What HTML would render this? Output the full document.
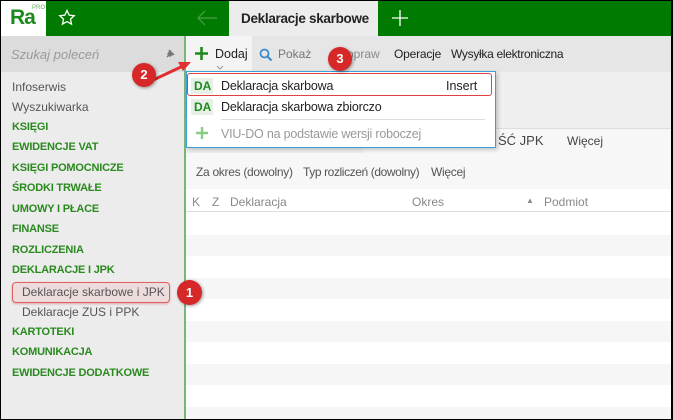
<!DOCTYPE html>
<html><head><meta charset="utf-8"><style>
*{margin:0;padding:0;box-sizing:border-box}
body{width:673px;height:420px;overflow:hidden;font-family:"Liberation Sans",sans-serif;font-size:12px;color:#333;background:#000;position:relative}
#f{position:absolute;left:1px;top:1px;width:670px;height:418px;background:#fff;overflow:hidden}
.a{position:absolute;white-space:nowrap}
.g{color:#2a8a1f;font-weight:bold;font-size:11px;letter-spacing:-.2px}
.s{color:#555;font-size:12px}
</style></head><body><div id="f">
<div class="a" style="left:0;top:0;width:45px;height:35px;background:#fff"></div>
<div class="a" style="left:9px;top:5px;font-size:21px;color:#1e8a1e;font-weight:bold;letter-spacing:-1px">Ra</div>
<div class="a" style="left:31px;top:4px;font-size:6px;color:#6a6">PRO</div>
<div class="a" style="left:45px;top:0;width:183px;height:35px;background:#007a00"></div>
<svg class="a" style="left:57px;top:8px" width="18" height="18" viewBox="0 0 18 18"><path d="M9 1.5l2.2 4.6 5 .6-3.7 3.4 1 5-4.5-2.5-4.5 2.5 1-5L1.8 6.7l5-.6z" fill="none" stroke="#fff" stroke-width="1.3"/></svg>
<svg class="a" style="left:195px;top:8px" width="22" height="18"><path d="M2 9h19M9 2L2 9l7 7" fill="none" stroke="#3a9a3a" stroke-width="1.5"/></svg>
<div class="a" style="left:228px;top:0;width:149px;height:35px;background:#ececec;font-size:13.5px;font-weight:bold;color:#222;padding:10px 0 0 12px;letter-spacing:-.3px">Deklaracje skarbowe</div>
<div class="a" style="left:377px;top:0;width:293px;height:35px;background:#007a00"></div>
<svg class="a" style="left:390px;top:8px" width="18" height="18"><path d="M9 1v16M1 9h16" stroke="#fff" stroke-width="1.3"/></svg>
<!-- sidebar -->
<div class="a" style="left:0;top:35px;width:183px;height:383px;background:#ececec"></div>
<div class="a" style="left:0;top:35px;width:183px;height:36px;background:#dcdcdc"></div>
<div class="a" style="left:10px;top:46px;font-style:italic;color:#999;font-size:13px">Szukaj poleceń</div>
<svg class="a" style="left:163px;top:47px" width="12" height="12"><path d="M3 9l3-3M5 2l5 5M6 3l-2 3 2 2 3-2" stroke="#777" stroke-width="1.5" fill="#777"/></svg>
<div class="a" style="left:183px;top:35px;width:2px;height:383px;background:#7bb47b"></div>
<div class="a s" style="left:11px;top:79px">Infoserwis</div>
<div class="a s" style="left:11px;top:99px">Wyszukiwarka</div>
<div class="a g" style="left:11px;top:120px">KSIĘGI</div>
<div class="a g" style="left:11px;top:140px">EWIDENCJE VAT</div>
<div class="a g" style="left:11px;top:161px">KSIĘGI POMOCNICZE</div>
<div class="a g" style="left:11px;top:181px">ŚRODKI TRWAŁE</div>
<div class="a g" style="left:11px;top:202px">UMOWY I PŁACE</div>
<div class="a g" style="left:11px;top:222px">FINANSE</div>
<div class="a g" style="left:11px;top:243px">ROZLICZENIA</div>
<div class="a g" style="left:11px;top:263px">DEKLARACJE I JPK</div>
<div class="a" style="left:11px;top:281px;width:158px;height:21px;border:1px solid #e06060;border-radius:4px;background:#ecdcdc;box-shadow:0 1px 2px rgba(200,0,0,.3)"></div>
<div class="a s" style="left:21px;top:284px">Deklaracje skarbowe i JPK</div>
<div class="a s" style="left:21px;top:304px">Deklaracje ZUS i PPK</div>
<div class="a g" style="left:11px;top:325px">KARTOTEKI</div>
<div class="a g" style="left:11px;top:345px">KOMUNIKACJA</div>
<div class="a g" style="left:11px;top:366px">EWIDENCJE DODATKOWE</div>
<!-- toolbar -->
<div class="a" style="left:185px;top:35px;width:485px;height:36px;background:#e6e6e6"></div>
<div class="a" style="left:185px;top:35px;width:66px;height:36px;background:#f4f4f4"></div>
<svg class="a" style="left:194px;top:46px" width="13" height="13"><path d="M6.5 0v13M0 6.5h13" stroke="#1e8a1e" stroke-width="2.6"/></svg>
<div class="a" style="left:214px;top:46px;font-size:12.5px;color:#222">Dodaj</div>
<svg class="a" style="left:215px;top:64px" width="8" height="5"><path d="M1 1l3 3 3-3" stroke="#999" fill="none"/></svg>
<svg class="a" style="left:258px;top:47px" width="14" height="14"><circle cx="5.5" cy="5.5" r="4" fill="none" stroke="#3a8acc" stroke-width="1.8"/><path d="M8.5 8.5l4 4" stroke="#3a8acc" stroke-width="2"/></svg>
<div class="a" style="left:277px;top:46px;color:#777;font-size:12px">Pokaż</div>
<div class="a" style="left:346px;top:46px;color:#888;font-size:12px">opraw</div>
<div class="a" style="left:393px;top:46px;color:#222;font-size:12px;letter-spacing:-.2px">Operacje</div>
<div class="a" style="left:450px;top:46px;color:#222;font-size:12px;letter-spacing:-.3px">Wysyłka elektroniczna</div>
<!-- content -->
<div class="a" style="left:185px;top:71px;width:485px;height:56px;background:#efefef"></div>
<div class="a" style="left:362px;top:127px;width:308px;height:25px;background:#f7f7f7;border-top:1px solid #ddd"></div>
<div class="a" style="left:185px;top:127px;width:177px;height:25px;background:#efefef"></div>
<div class="a" style="left:497px;top:132px;color:#444;font-size:13px">ŚĆ JPK</div>
<div class="a" style="left:566px;top:133px;color:#444">Więcej</div>
<div class="a" style="left:185px;top:152px;width:485px;height:36px;background:#f7f7f7"></div>
<div class="a" style="left:195px;top:164px;color:#555;letter-spacing:-.3px">Za okres (dowolny)</div>
<div class="a" style="left:302px;top:164px;color:#555;letter-spacing:-.4px">Typ rozliczeń (dowolny)</div>
<div class="a" style="left:430px;top:164px;color:#555;letter-spacing:-.3px">Więcej</div>
<div class="a" style="left:185px;top:188px;width:485px;height:23px;background:#fff;border-bottom:1px solid #ddd"></div>
<div class="a" style="left:191px;top:194px;color:#888">K</div>
<div class="a" style="left:211px;top:194px;color:#888">Z</div>
<div class="a" style="left:229px;top:194px;color:#888">Deklaracja</div>
<div class="a" style="left:411px;top:194px;color:#888">Okres</div>
<div class="a" style="left:525px;top:195px;color:#888;font-size:8px">▲</div>
<div class="a" style="left:543px;top:194px;color:#888">Podmiot</div>
<div class="a" style="left:185px;top:234px;width:485px;height:21px;background:#f6f6f6"></div>
<div class="a" style="left:185px;top:277px;width:485px;height:21px;background:#f6f6f6"></div>
<div class="a" style="left:185px;top:320px;width:485px;height:21px;background:#f6f6f6"></div>
<div class="a" style="left:185px;top:363px;width:485px;height:21px;background:#f6f6f6"></div>
<div class="a" style="left:185px;top:406px;width:485px;height:12px;background:#f6f6f6"></div>
<!-- dropdown -->
<div class="a" style="left:185px;top:70px;width:310px;height:77px;background:#fff;border:1px solid #3aa0d8;box-shadow:2px 2px 4px rgba(0,0,0,.2)"></div>
<div class="a" style="left:190px;top:77px;width:22px;height:16px;background:#e6f0e6"></div>
<div class="a" style="left:193px;top:78px;color:#1e8a1e;font-weight:bold;font-size:12px">DA</div>
<div class="a" style="left:220px;top:78px;color:#222;font-size:12.5px;letter-spacing:-.2px">Deklaracja skarbowa</div>
<div class="a" style="left:445px;top:78px;color:#222;font-size:12.5px">Insert</div>
<div class="a" style="left:186px;top:72px;width:305px;height:23px;border:1.5px solid #e04040;border-radius:3px"></div>
<div class="a" style="left:190px;top:98px;width:22px;height:16px;background:#e6f0e6"></div>
<div class="a" style="left:193px;top:99px;color:#1e8a1e;font-weight:bold;font-size:12px">DA</div>
<div class="a" style="left:220px;top:99px;color:#222;font-size:12.5px;letter-spacing:-.2px">Deklaracja skarbowa zbiorczo</div>
<div class="a" style="left:220px;top:118px;width:264px;height:1px;background:#ddd"></div>
<svg class="a" style="left:195px;top:126px" width="12" height="12"><path d="M6 0v12M0 6h12" stroke="#8c8" stroke-width="2.4"/></svg>
<div class="a" style="left:220px;top:126px;color:#999;font-size:12.5px;letter-spacing:-.2px">VIU-DO na podstawie wersji roboczej</div>
<!-- badges -->
<svg class="a" style="left:130px;top:50px" width="70" height="45"><path d="M20 30L52 15" stroke="#e03030" stroke-width="3"/><path d="M60 11l-13 0 5 9z" fill="#e03030"/></svg>
<div class="a" style="left:131px;top:62px;width:24px;height:24px;border-radius:50%;background:#d62828;color:#fff;font-weight:bold;text-align:center;line-height:24px;font-size:13px;box-shadow:1px 1px 3px rgba(0,0,0,.4)">2</div>
<div class="a" style="left:327px;top:46px;width:24px;height:24px;border-radius:50%;background:#d62828;color:#fff;font-weight:bold;text-align:center;line-height:24px;font-size:13px;box-shadow:1px 1px 3px rgba(0,0,0,.4)">3</div>
<div class="a" style="left:176px;top:279px;width:25px;height:25px;border-radius:50%;background:#d62828;color:#fff;font-weight:bold;text-align:center;line-height:25px;font-size:13px;box-shadow:1px 1px 3px rgba(0,0,0,.4)">1</div>
</div></body></html>
